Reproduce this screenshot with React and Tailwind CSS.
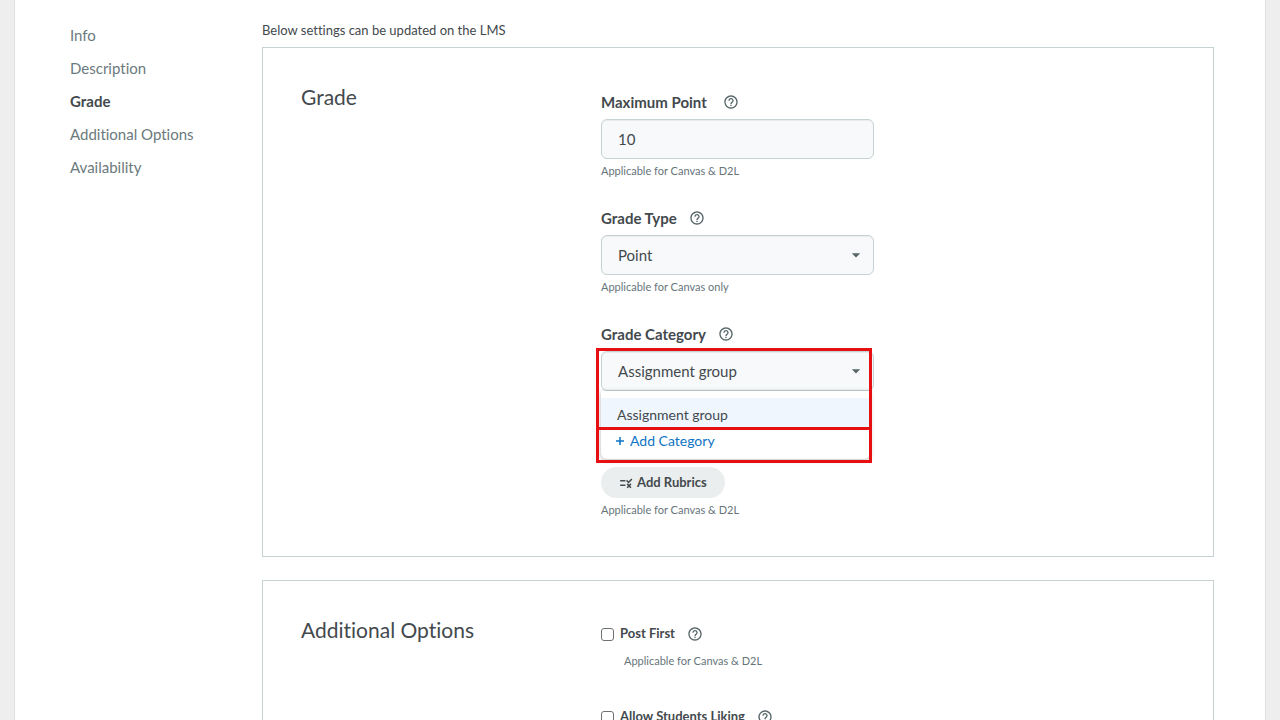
import { MdHelpOutline, MdArrowDropDown } from "react-icons/md";

const sections = ["Info", "Description", "Grade", "Additional Options", "Availability"];

function PlusIcon() {
  return (
    <svg viewBox="0 0 14 14" className="mt-px size-3.5 fill-none stroke-current stroke-[1.5]" aria-hidden="true">
      <path d="M7 3v8M3 7h8" />
    </svg>
  );
}

function RubricIcon() {
  return (
    <svg viewBox="0 0 24 24" className="size-3.5 fill-none stroke-current stroke-[2.6]" aria-hidden="true">
      <path d="M2 8h9M2 16h9M13 7.5l3.5 3.5L22 5.3M14 13.5l6.5 6.5M20.500 13.500l-6.500 6.500" />
    </svg>
  );
}

function Help({ topic }) {
  return (
    <button type="button" aria-label={`Help: ${topic}`} className="text-[#566668]">
      <MdHelpOutline className="size-4" />
    </button>
  );
}

function Note({ children }) {
  return <p className="text-[11px] leading-4 text-[#66757a]">{children}</p>;
}

function FieldLabel({ htmlFor, gap, children }) {
  return (
    <div className={`flex h-6 items-center ${gap}`}>
      <label htmlFor={htmlFor} className="text-[15px] font-bold">{children}</label>
      <Help topic={children} />
    </div>
  );
}

const boxClass =
  "block h-10 w-full appearance-none rounded-md border border-[#c7d2d4] bg-[#f7f9fb] px-4 text-[15px] text-[#43494d] shadow-[inset_0_1px_1px_rgba(0,0,0,0.06)] outline-none";

function SelectBox({ id, options }) {
  return (
    <div className="relative">
      <select id={id} className={boxClass}>
        {options.map((o) => (
          <option key={o}>{o}</option>
        ))}
      </select>
      <MdArrowDropDown className="pointer-events-none absolute top-2.5 right-2 size-5 text-[#566668]" />
    </div>
  );
}

function Card({ title, children }) {
  return (
    <section className="flex border border-[#c7d2d4] pt-[42px] pr-10 pb-[38px] pl-[38px]">
      <h2 className="w-[300px] shrink-0 text-[21px] leading-[14px]">{title}</h2>
      <div className="w-[273px]">{children}</div>
    </section>
  );
}

function CheckOption({ id, label }) {
  return (
    <div>
      <div className="flex h-[22px] items-center">
        <input
          id={id}
          type="checkbox"
          className="mr-1.5 size-[13px] appearance-none rounded-[3px] border border-[#6b7173] bg-white checked:bg-[#0e7cc4]"
        />
        <label htmlFor={id} className="mr-3 text-[13px] font-bold">{label}</label>
        <Help topic={label} />
      </div>
      <div className="mt-2 pl-[23px]">
        <Note>Applicable for Canvas &amp; D2L</Note>
      </div>
    </div>
  );
}

export default function App() {
  return (
    <div className="min-h-screen bg-[#eeeeee] px-3.5 font-['Lato',sans-serif] text-[#43494d] [font-variant-ligatures:no-common-ligatures]">
      <div className="flex min-h-screen border-x border-[#e0e0e0] bg-white pr-[51px] pl-[55px]">
        <nav aria-label="Sections" className="w-48 shrink-0 pt-[19px]">
          <ul className="flex flex-col">
            {sections.map((s) => (
              <li key={s} className="h-[33px]">
                <a
                  href="#"
                  className={s === "Grade" ? "text-[15px] leading-8 font-bold" : "text-[15px] leading-8 text-[#6b7a7c]"}
                >
                  {s}
                </a>
              </li>
            ))}
          </ul>
        </nav>

        <main className="min-w-0 grow pt-5">
          <p className="mb-[7px] text-[13px] leading-5">Below settings can be updated on the LMS</p>

          <div className="flex flex-col gap-[23px]">
            <Card title="Grade">
              <FieldLabel htmlFor="max" gap="gap-4">Maximum Point</FieldLabel>
              <div className="mt-[5px] mb-1">
                <input id="max" type="text" defaultValue="10" className={boxClass} />
              </div>
              <Note>Applicable for Canvas &amp; D2L</Note>

              <div className="mt-[27px]">
                <FieldLabel htmlFor="type" gap="gap-3">Grade Type</FieldLabel>
                <div className="mt-[5px] mb-1">
                  <SelectBox id="type" options={["Point", "Percentage"]} />
                </div>
                <Note>Applicable for Canvas only</Note>
              </div>

              <div className="mt-[27px]">
                <FieldLabel htmlFor="category" gap="gap-3">Grade Category</FieldLabel>
                <div className="relative mt-[5px]">
                  <SelectBox id="category" options={["Assignment group"]} />
                  <div className="absolute top-10 right-1 left-0 rounded-b-md bg-white pt-[7px] shadow-[0_1px_5px_rgba(0,0,0,0.3)]">
                    <button type="button" className="block h-8 w-full bg-[#eff6fe] px-4 pt-0.5 text-left text-sm">
                      Assignment group
                    </button>
                    <button
                      type="button"
                      className="flex h-[29px] w-full items-start gap-[3px] px-3 pt-[3px] text-left text-sm leading-4 text-[#0e74c4]"
                    >
                      <PlusIcon />
                      Add Category
                    </button>
                  </div>
                  <div className="pointer-events-none absolute -top-[3px] right-0.5 -left-[5px] h-[82px] border-3 border-[#e60f12]" />
                  <div className="pointer-events-none absolute top-[76px] right-0.5 -left-[5px] h-9 border-3 border-[#e60f12]" />
                </div>
              </div>

              <button
                type="button"
                className="mt-[76px] mb-1 flex h-[31px] items-center gap-1 rounded-full bg-[#ebeeee] px-[18px] text-[13px] font-bold"
              >
                <RubricIcon />
                Add Rubrics
              </button>
              <Note>Applicable for Canvas &amp; D2L</Note>
            </Card>

            <Card title="Additional Options">
              <div className="flex flex-col gap-[37px]">
                <CheckOption id="post-first" label="Post First" />
                <CheckOption id="liking" label="Allow Students Liking" />
              </div>
            </Card>
          </div>
        </main>
      </div>
    </div>
  );
}
